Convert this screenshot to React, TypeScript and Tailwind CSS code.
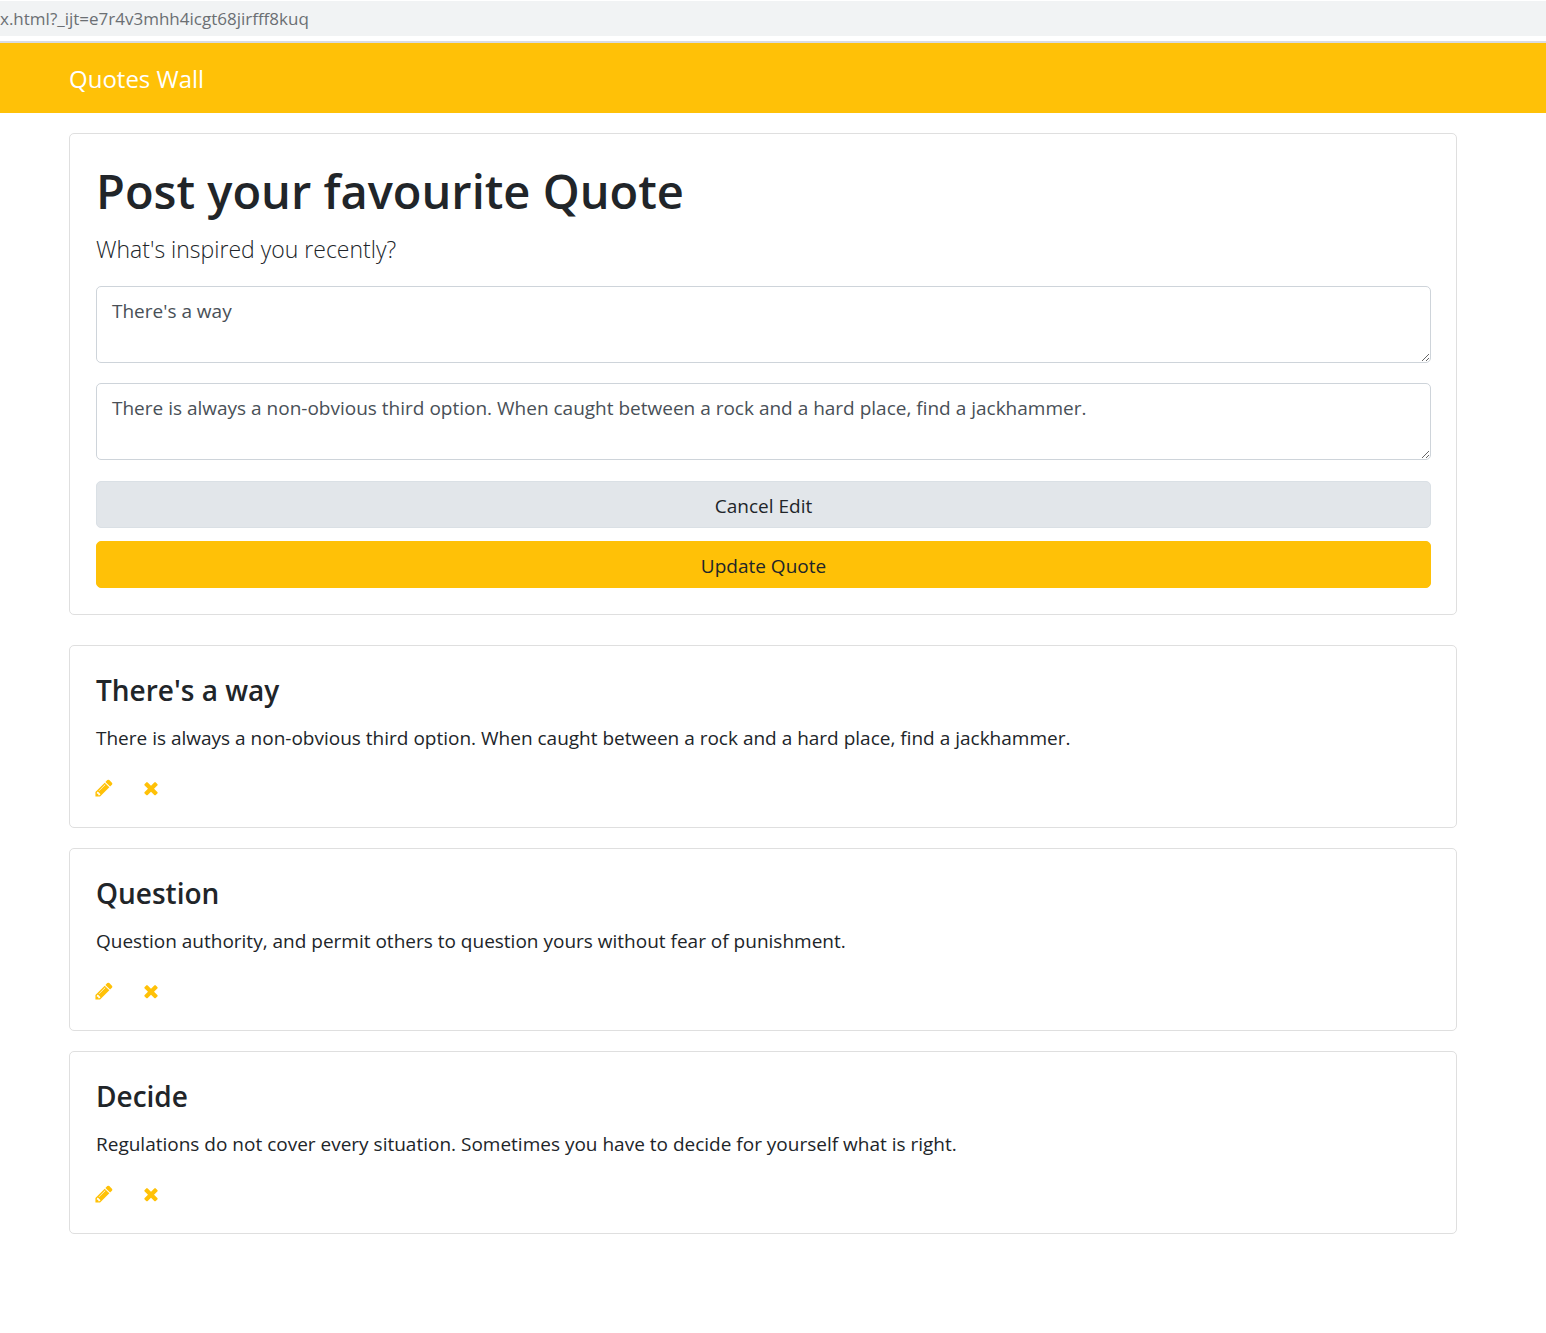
import { useState } from "react";

type Quote = { title: string; body: string };

const quotes: Quote[] = [
  {
    title: "There's a way",
    body: "There is always a non-obvious third option. When caught between a rock and a hard place, find a jackhammer.",
  },
  {
    title: "Question",
    body: "Question authority, and permit others to question yours without fear of punishment.",
  },
  {
    title: "Decide",
    body: "Regulations do not cover every situation. Sometimes you have to decide for yourself what is right.",
  },
];

function PencilIcon() {
  return (
    <svg viewBox="0 0 1792 1792" className="size-5" fill="currentColor" aria-hidden="true">
      <path d="M491 1536l91-91-235-235-91 91v107h128v128h107zM1014 608q0-22-22-22-10 0-17 7l-542 542q-7 7-7 17 0 22 22 22 10 0 17-7l542-542q7-7 7-17zM960 416l416 416-832 832h-416v-416zM1643 512q0 53-37 90l-166 166-416-416 166-165q36-38 90-38 53 0 91 38l235 234q37 39 37 91z" />
    </svg>
  );
}

function CrossIcon() {
  return (
    <svg viewBox="0 0 1792 1792" className="size-5" fill="currentColor" aria-hidden="true">
      <path d="M1490 1322q0 40-28 68l-136 136q-28 28-68 28t-68-28l-294-294-294 294q-28 28-68 28t-68-28l-136-136q-28-28-28-68t28-68l294-294-294-294q-28-28-28-68t28-68l136-136q28-28 68-28t68 28l294 294 294-294q28-28 68-28t68 28l136 136q28 28 28 68t-28 68l-294 294 294 294q28 28 28 68z" />
    </svg>
  );
}

function AddressBar() {
  return (
    <div className="overflow-hidden border-b-2 border-[#dadce0] bg-white pt-px pb-[5px]">
      <div className="h-[35px] bg-[#f1f3f4] text-[17px] leading-[35px] whitespace-nowrap text-[#6b6f73]">
        x.html?_ijt=e7r4v3mhh4icgt68jirfff8kuq
      </div>
    </div>
  );
}

function QuoteForm() {
  const [title, setTitle] = useState(quotes[0].title);
  const [body, setBody] = useState(quotes[0].body);
  const field =
    "block h-[77px] w-full resize-y rounded-[5px] border border-[#ced4da] bg-white px-[15px] py-[9px] text-[19px] leading-[30px] text-[#495057]";
  const button = "block h-[47px] w-full rounded-[5px] border pt-0.5 text-[19px] leading-[30px] text-[#212529]";
  return (
    <form
      className="rounded-[5px] border border-[#dfdfdf] bg-white pt-[27px] pr-[25px] pb-[26px] pl-[26px]"
      onSubmit={(e) => e.preventDefault()}
    >
      <h1 className="mb-2.5 text-[47px] leading-[60px] font-semibold">Post your favourite Quote</h1>
      <p className="mb-[19px] text-[23px] leading-9 font-light">What's inspired you recently?</p>
      <div className="mb-[21px] flex flex-col gap-5">
        <textarea aria-label="Quote title" className={field} value={title} onChange={(e) => setTitle(e.target.value)} />
        <textarea aria-label="Quote" className={field} value={body} onChange={(e) => setBody(e.target.value)} />
      </div>
      <div className="flex flex-col gap-[13px]">
        <button type="button" className={`${button} border-[#dae0e5] bg-[#e2e6ea]`}>
          Cancel Edit
        </button>
        <button type="submit" className={`${button} border-[#ffc107] bg-[#ffc107]`}>
          Update Quote
        </button>
      </div>
    </form>
  );
}

function QuoteCard({ quote }: { quote: Quote }) {
  return (
    <article className="rounded-[5px] border border-[#dfdfdf] bg-white px-[26px] pt-[26px] pb-6">
      <h2 className="mb-[15px] text-[28px] leading-9 font-semibold">{quote.title}</h2>
      <p className="mb-5 text-[19px] leading-[30px]">{quote.body}</p>
      <div className="-ml-0.5 flex h-[30px] items-center gap-[27px] text-[#ffc107]">
        <button type="button" aria-label={`Edit ${quote.title}`}>
          <PencilIcon />
        </button>
        <button type="button" aria-label={`Delete ${quote.title}`}>
          <CrossIcon />
        </button>
      </div>
    </article>
  );
}

export default function App() {
  return (
    <div className="min-h-screen bg-white font-['Open_Sans','Noto_Sans',sans-serif] text-[#212529]">
      <AddressBar />
      <nav className="bg-[#ffc107] pt-[18px] pr-[89px] pb-4 pl-[69px]">
        <a href="#" className="text-[24px] leading-9 text-white">
          Quotes Wall
        </a>
      </nav>
      <main className="pt-5 pr-[89px] pl-[69px]">
        <QuoteForm />
        <section className="mt-[30px] flex flex-col gap-5" aria-label="Quotes">
          {quotes.map((q) => (
            <QuoteCard key={q.title} quote={q} />
          ))}
        </section>
      </main>
    </div>
  );
}
